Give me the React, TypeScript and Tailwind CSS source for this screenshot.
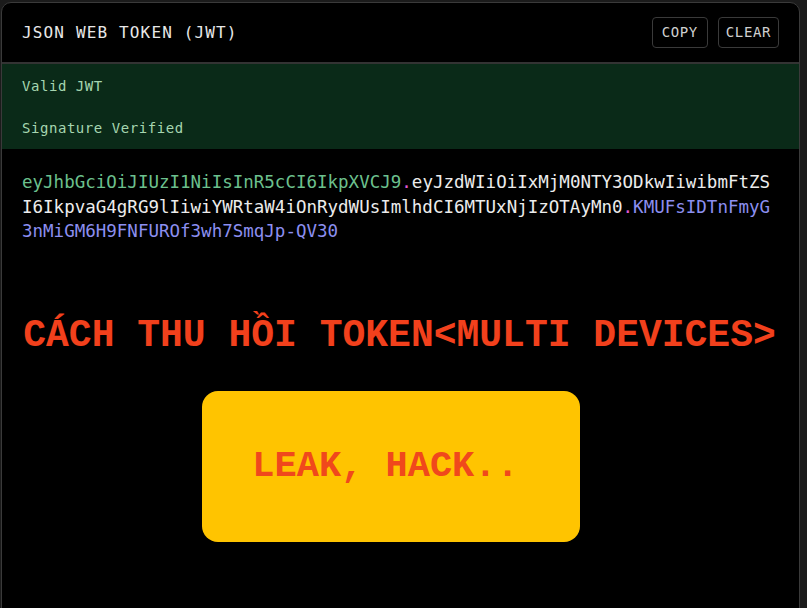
import React from "react";

export default function App() {
  const mono = { fontFamily: '"DejaVu Sans Mono", monospace' } as React.CSSProperties;
  const courier = { fontFamily: '"Liberation Mono", "Courier New", monospace' } as React.CSSProperties;
  return (
    <div className="w-[807px] h-[608px] overflow-hidden bg-[#1b1b1b] pt-[2px] pl-[1px]">
      <div className="w-[799px] h-[640px] rounded-[10px] border border-[#3a3a3a] bg-black flex flex-col overflow-hidden">
        {/* header */}
        <div className="h-[61px] shrink-0 flex items-center justify-between pl-[20px] pr-[20px] border-b-2 border-[#333333]">
          <div className="text-[16px] tracking-[1.15px] text-[#e8e8e8] font-medium" style={mono}>
            JSON WEB TOKEN (JWT)
          </div>
          <div className="flex gap-[10px] mt-[-1px]">
            <button className="h-[31px] px-[9px] rounded-[4px] border border-[#3a3a3a] text-[14px] tracking-[0.6px] text-[#d0d0d0] bg-black" style={mono}>
              COPY
            </button>
            <button className="h-[31px] px-[7px] rounded-[4px] border border-[#3a3a3a] text-[14px] tracking-[0.6px] text-[#d0d0d0] bg-black" style={mono}>
              CLEAR
            </button>
          </div>
        </div>
        {/* status */}
        <div className="h-[85px] shrink-0 bg-[#0a2a18] pl-[20px] pt-[12px] flex flex-col gap-[22px] text-[14px] tracking-[0.55px] text-[#a6d6b0]" style={mono}>
          <div className="h-[20px] leading-[20px]">Valid JWT</div>
          <div className="h-[20px] leading-[20px]">Signature Verified</div>
        </div>
        {/* token */}
        <div className="pl-[20px] pt-[21px]">
          <div className="w-[752px] break-all text-[17.5px] leading-[24.5px]" style={mono}>
            <span className="text-[#6cc08e]">eyJhbGciOiJIUzI1NiIsInR5cCI6IkpXVCJ9</span>
            <span className="text-[#e05ad6]">.</span>
            <span className="text-[#ececec]">eyJzdWIiOiIxMjM0NTY3ODkwIiwibmFtZSI6IkpvaG4gRG9lIiwiYWRtaW4iOnRydWUsImlhdCI6MTUxNjIzOTAyMn0</span>
            <span className="text-[#e05ad6]">.</span>
            <span className="text-[#8c8ff0]">KMUFsIDTnFmyG3nMiGM6H9FNFUROf3wh7SmqJp-QV30</span>
          </div>
        </div>
        {/* image content */}
        <div className="flex flex-col items-center mt-[70px]">
          <div className="text-[38px] leading-[44px] font-bold text-[#f2401c] whitespace-nowrap ml-[-2px]" style={courier}>
            CÁCH THU HỒI TOKEN&lt;MULTI DEVICES&gt;
          </div>
          <div className="mt-[33px] ml-[-20px] w-[378px] h-[151px] rounded-[16px] bg-[#ffc400] flex items-center justify-center">
            <div className="text-[37px] font-bold text-[#f0481c] mr-[10px] mt-[2px]" style={courier}>
              LEAK, HACK..
            </div>
          </div>
        </div>
      </div>
    </div>
  );
}
